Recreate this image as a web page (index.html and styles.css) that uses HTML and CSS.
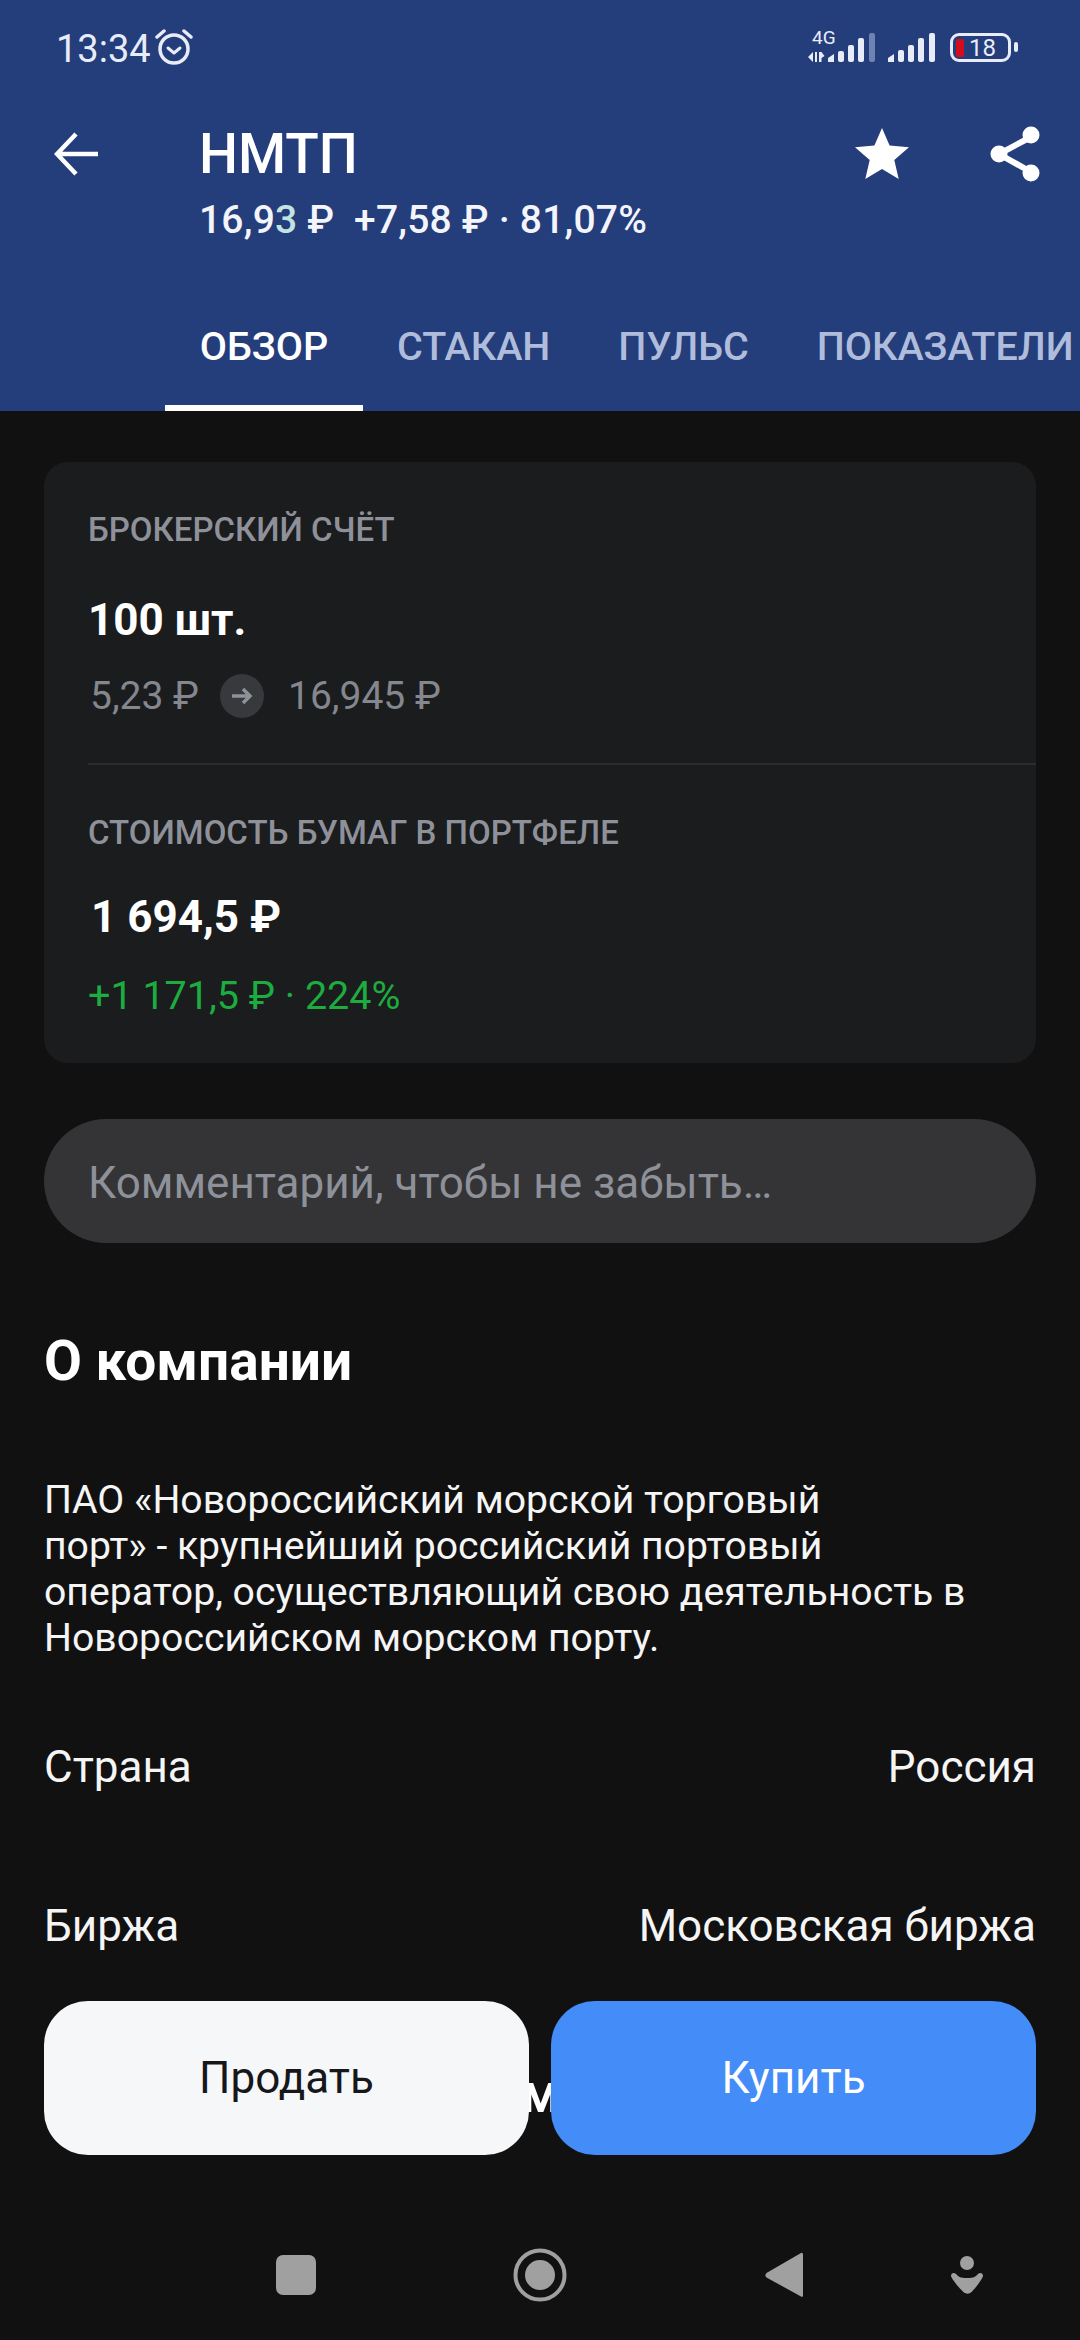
FILE: index.html
```html
<!DOCTYPE html>
<html lang="ru">
<head>
<meta charset="utf-8">
<title>НМТП</title>
<link rel="stylesheet" href="styles.css">
</head>
<body>
<div class="app">
  <header class="top">
    <div class="status">
      <div class="status-left">
        <span class="time">13:34</span>
        <svg class="alarm" width="38" height="38" viewBox="0 0 38 38"><circle cx="19" cy="21" r="14" fill="none" stroke="#e8ecf8" stroke-width="3.500"/><path d="M13 20l6 5 6-5" fill="none" stroke="#e8ecf8" stroke-width="3" stroke-linecap="round" stroke-linejoin="round"/><path d="M2 9l7-6M36 9l-7-6" fill="none" stroke="#e8ecf8" stroke-width="3.500" stroke-linecap="round"/></svg>
      </div>
      <div class="status-right">
        <svg class="signal" width="68" height="34" viewBox="0 0 68 34"><path d="M5 22v10L0 27zM7 22v10h2V22zM11 22v10h2.500v-4l3-2-3-4z" fill="#e8ecf8"/><path d="M20 28l6-4v8h-6z" fill="#e8ecf8"/><rect x="30" y="21" width="6" height="11" rx="2" fill="#e8ecf8"/><rect x="40" y="15" width="6" height="17" rx="2" fill="#e8ecf8"/><rect x="50" y="8" width="6" height="24" rx="2" fill="#e8ecf8"/><rect x="61" y="3" width="6" height="29" rx="2" fill="#6f83b3"/></svg>
        <svg class="signal2" width="48" height="34" viewBox="0 0 48 34"><path d="M0 28l6-4v8H0z" fill="#e8ecf8"/><rect x="10" y="20" width="6" height="12" rx="2" fill="#e8ecf8"/><rect x="20" y="15" width="6" height="17" rx="2" fill="#e8ecf8"/><rect x="30" y="8" width="6" height="24" rx="2" fill="#e8ecf8"/><rect x="41" y="3" width="6" height="29" rx="2" fill="#e8ecf8"/></svg>
        <div class="battery"><span class="batt-fill"></span><span class="batt-num">18</span></div>
        <span class="batt-tip"></span>
        <span class="net">4G</span>
      </div>
    </div>
    <div class="titlebar">
      <svg class="back" width="44" height="44" viewBox="0 0 44 44"><path d="M44 22H3M22 2L3 22l19 20" fill="none" stroke="#fff" stroke-width="4.500"/></svg>
      <div class="title-block">
        <h1 class="ticker">НМТП</h1>
        <p class="quote">16,9<span class="tick">3</span> ₽ &nbsp;+7,58 ₽ · 81,07%</p>
      </div>
      <svg class="star" width="54" height="54" viewBox="0 0 54 54"><path d="M27 1l7.600 17.600L54 20.200 39.300 33l4.400 19L27 42 10.300 52l4.400-19L0 20.200l19.400-1.600z" fill="#fff"/></svg>
      <svg class="share" width="50" height="56" viewBox="0 0 50 56"><path d="M41 11L9 28l32 18" fill="none" stroke="#fff" stroke-width="6"/><circle cx="41" cy="9" r="8.500" fill="#fff"/><circle cx="9" cy="28" r="8.500" fill="#fff"/><circle cx="41" cy="47" r="8.500" fill="#fff"/></svg>
    </div>
    <nav class="tabs">
      <span class="tab active">ОБЗОР</span>
      <span class="tab">СТАКАН</span>
      <span class="tab">ПУЛЬС</span>
      <span class="tab">ПОКАЗАТЕЛИ</span>
    </nav>
  </header>

  <main class="content">
    <section class="card">
      <div class="card-part first">
        <div class="label">БРОКЕРСКИЙ СЧЁТ</div>
        <div class="amount">100 шт.</div>
        <div class="prices">
          <span>5,23 ₽</span>
          <span class="arrow-dot"><svg width="22" height="20" viewBox="0 0 22 20"><path d="M1 10h18M12 3l7 7-7 7" fill="none" stroke="#8e9199" stroke-width="3.500"/></svg></span>
          <span>16,945 ₽</span>
        </div>
      </div>
      <div class="divider"></div>
      <div class="card-part second">
        <div class="label">СТОИМОСТЬ БУМАГ В ПОРТФЕЛЕ</div>
        <div class="amount value">1 694,5 ₽</div>
        <div class="gain">+1 171,5 ₽ · 224%</div>
      </div>
    </section>

    <div class="comment">Комментарий, чтобы не забыть…</div>

    <h2 class="section-title">О компании</h2>
    <p class="about">ПАО «Новороссийский морской торговый<br>порт» - крупнейший российский портовый<br>оператор, осуществляющий свою деятельность в<br>Новороссийском морском порту.</p>

    <div class="row country"><span>Страна</span><span>Россия</span></div>
    <div class="row exchange"><span>Биржа</span><span>Московская биржа</span></div>
    <div class="behind">м</div>
  </main>

  <div class="actions">
    <button class="btn sell">Продать</button>
    <button class="btn buy">Купить</button>
  </div>

  <nav class="sysnav">
    <svg class="nav-square" width="40" height="40" viewBox="0 0 40 40"><rect width="40" height="40" rx="7" fill="#a0a0a0"/></svg>
    <svg class="nav-home" width="54" height="54" viewBox="0 0 54 54"><circle cx="27" cy="27" r="24.500" fill="none" stroke="#a0a0a0" stroke-width="4"/><circle cx="27" cy="27" r="15" fill="#a0a0a0"/></svg>
    <svg class="nav-back" width="38" height="46" viewBox="0 0 38 46"><path d="M36 1c1.500-.5 2 .5 2 2v40c0 2-1 2.500-2 1.500L1.500 25.500c-1.500-1.500-1.500-3 0-4.500z" fill="#a0a0a0"/></svg>
    <svg class="nav-person" width="34" height="38" viewBox="0 0 34 38"><ellipse cx="17" cy="7" rx="7" ry="7" fill="#a0a0a0"/><path d="M1 20c0-3 3-4 5-2 3 3 4 4 11 4s8-1 11-4c2-2 5-1 5 2 0 2-10 16-13 17-2 1-3 1-5 0C12 36 1 22 1 20z" fill="#a0a0a0"/></svg>
  </nav>
</div>
</body>
</html>
```

FILE: styles.css
```css
* { box-sizing: border-box; }
html, body { margin: 0; padding: 0; }
body { background: #111112; font-family: Roboto, "Noto Sans", sans-serif; color: #fff; }
.app { position: relative; width: 1080px; height: 2340px; overflow: hidden; background: #111112; }

.top { height: 411px; background: #243d7b; display: flex; flex-direction: column; }
.status { height: 92px; padding: 26px 62px 0 56px; display: flex; justify-content: space-between; }
.status-left { display: flex; align-items: flex-start; gap: 4px; }
.time { font-size: 38px; line-height: 46px; color: #e8ecf8; }
.alarm { margin-top: 2px; }
.status-right { position: relative; display: flex; align-items: flex-start; padding-top: 4px; }
.net { position: absolute; left: 4px; top: 1px; font-size: 19px; line-height: 22px; color: #e8ecf8; }
.signal2 { margin-left: 12px; }
.battery { margin-left: 14px; margin-top: 3px; width: 61px; height: 29px; border: 3px solid #e8ecf8; border-radius: 9px; display: flex; align-items: center; padding-left: 3px; gap: 5px; }
.batt-fill { width: 8px; height: 18px; background: #d40d1c; border-radius: 2px; }
.batt-num { font-size: 24px; line-height: 24px; color: #e8ecf8; }
.batt-tip { width: 4px; height: 10px; margin: 12px 0 0 3px; background: #e8ecf8; border-radius: 2px; }

.titlebar { height: 150px; padding: 0 0 0 54px; display: flex; align-items: flex-start; position: relative; }
.back { margin-top: 40px; }
.title-block { margin-left: 101px; padding-top: 30px; }
.ticker { margin: 0; font-size: 55px; line-height: 64px; font-weight: 500; }
.quote { margin: 11px 0 0; font-size: 39px; line-height: 46px; font-weight: 500; letter-spacing: 0.2px; color: #f3f5fb; white-space: nowrap; }
.tick { color: #c3e3e0; }
.star { position: absolute; left: 855px; top: 35px; }
.share { position: absolute; left: 990px; top: 34px; }

.tabs { flex: 1; display: flex; padding-left: 165px; align-items: stretch; overflow: hidden; }
.tab { flex: none; padding: 62px 34px 16px; display: flex; align-items: center; font-size: 39.500px; font-weight: 500; color: #b0bcdb; white-space: nowrap; border-bottom: 6px solid transparent; }
.tab.active { color: #fff; border-bottom-color: #fff; width: 198px; justify-content: center; }

.content { padding: 51px 44px 0; }
.card { background: #1b1c1e; border-radius: 24px; height: 601px; }
.card-part { padding-left: 44px; }
.first { height: 301px; padding-top: 48px; }
.divider { height: 2px; margin-left: 44px; background: #2a2b2d; }
.second { padding-top: 48px; }
.label { font-size: 33px; line-height: 40px; font-weight: 500; color: #8e9199; }
.amount { font-size: 44px; line-height: 50px; font-weight: 700; margin-top: 45px; }
.value { margin-left: 3px; margin-top: 39px; }
.prices { display: flex; align-items: center; margin-top: 28px; font-size: 39px; line-height: 46px; color: #84878e; padding-left: 2px; }
.arrow-dot { width: 44px; height: 44px; border-radius: 50%; background: #38393c; display: flex; align-items: center; justify-content: center; margin: 0 24px 0 21px; }
.gain { margin-top: 32px; font-size: 39.500px; line-height: 44px; color: #1dac3f; }

.comment { margin-top: 56px; height: 124px; border-radius: 62px; background: #343436; padding: 4px 0 0 44px; display: flex; align-items: center; font-size: 44px; color: #8e9199; }
.section-title { margin: 87px 0 0; font-size: 55px; line-height: 62px; font-weight: 700; }
.about { margin: 85px 0 0; font-size: 39.200px; line-height: 46px; color: #f5f5f5; white-space: nowrap; }
.row { display: flex; justify-content: space-between; font-size: 44px; line-height: 50px; color: #f5f5f5; }
.country { margin-top: 81px; }
.exchange { margin-top: 109px; }
.behind { margin: 111px 0 0 476px; font-size: 55px; line-height: 62px; font-weight: 700; }

.actions { position: absolute; left: 44px; top: 2001px; display: flex; gap: 22px; }
.btn { width: 485px; height: 154px; border: 0; border-radius: 44px; font-family: inherit; font-size: 44px; }
.sell { background: #f6f7f9; color: #16171a; }
.buy { background: #448cf8; color: #fff; }

.sysnav { position: absolute; left: 0; right: 0; bottom: 0; height: 140px; background: #111112; }
.sysnav svg { position: absolute; }
.nav-square { left: 276px; top: 55px; }
.nav-home { left: 513px; top: 48px; }
.nav-back { left: 765px; top: 52px; }
.nav-person { left: 950px; top: 56px; }
```
